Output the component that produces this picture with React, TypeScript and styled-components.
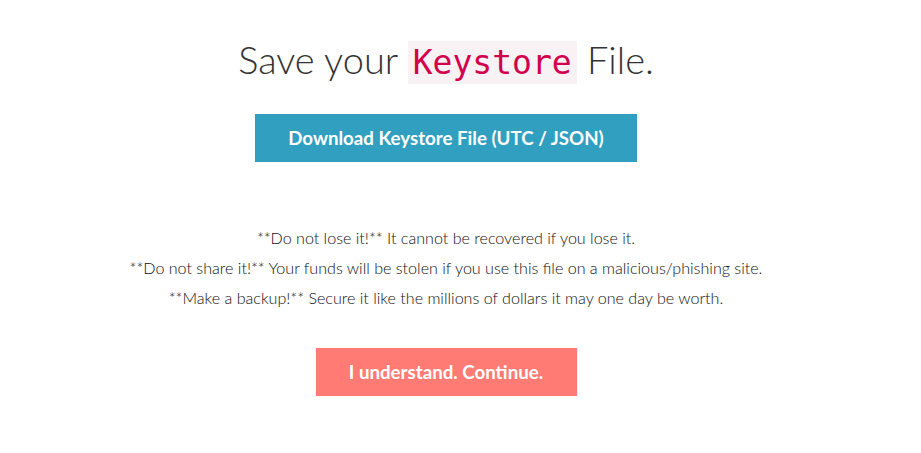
import React from 'react';
import styled, { createGlobalStyle } from 'styled-components';

const GlobalStyle = createGlobalStyle`
    body {
        margin: 0;
        background: #fff;
        font-family: Lato, "Open Sans", sans-serif;
        color: #333;
    }
`;

const Page = styled.section`
    display: flex;
    flex-direction: column;
    align-items: center;
    padding: 35px 29px 0 0;
`;

const Title = styled.h1`
    margin: 0 0 27px;
    font-size: 38px;
    font-weight: 300;
    line-height: 48px;
    color: #333;
`;

const Code = styled.code`
    font-family: "DejaVu Sans Mono", "Liberation Mono", monospace;
    font-size: 33px;
    color: #d0024c;
    background: #f9f2f4;
    padding: 2px 5px;
`;

const Button = styled.button<{ $tone: string; $width: number }>`
    width: ${props => props.$width}px;
    height: 48px;
    border: 0;
    border-radius: 0;
    background: ${props => props.$tone};
    color: #fff;
    font-family: Lato, sans-serif;
    font-weight: 700;
    font-size: 18.7px;
    cursor: pointer;
`;

const Notes = styled.div`
    margin: 61px 0 35px;
    display: flex;
    flex-direction: column;
    align-items: center;
`;

const Note = styled.p`
    margin: 0;
    font-size: 16.1px;
    font-weight: 300;
    line-height: 30px;
    color: #111;
`;

const notes = [
    '**Do not lose it!** It cannot be recovered if you lose it.',
    '**Do not share it!** Your funds will be stolen if you use this file on a malicious/phishing site.',
    '**Make a backup!** Secure it like the millions of dollars it may one day be worth.'
];

export default function App() {
    return (
        <>
            <GlobalStyle />
            <Page>
                <Title>Save your <Code>Keystore</Code> File.</Title>
                <Button $tone="#319fc0" $width={382}>Download Keystore File (UTC / JSON)</Button>
                <Notes>
                    {notes.map(n => <Note key={n}>{n}</Note>)}
                </Notes>
                <Button $tone="#ff7b73" $width={261}>I understand. Continue.</Button>
            </Page>
        </>
    );
}
